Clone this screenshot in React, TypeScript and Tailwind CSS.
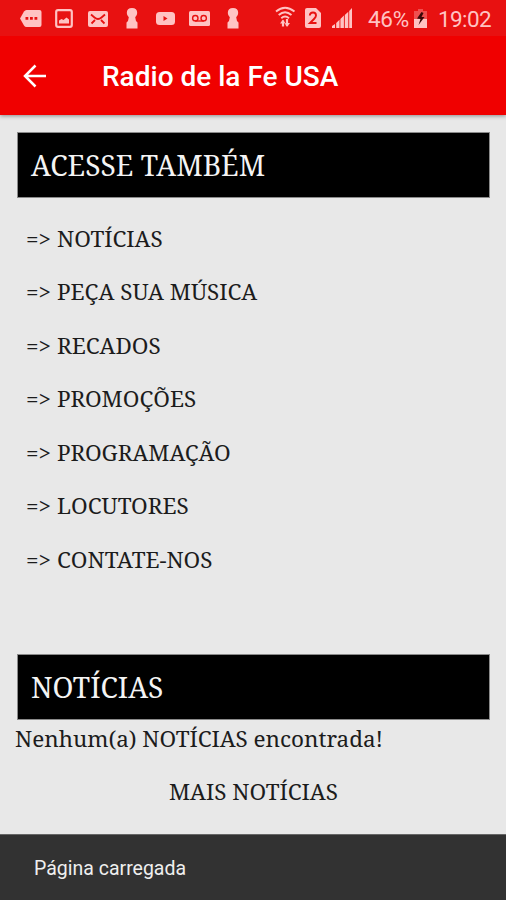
import { ReactNode } from 'react';

const menuItems = ['NOTÍCIAS', 'PEÇA SUA MÚSICA', 'RECADOS', 'PROMOÇÕES', 'PROGRAMAÇÃO', 'LOCUTORES', 'CONTATE-NOS'];

const KeyholeIcon = () => (
  <svg width="12" height="21" viewBox="0 0 12 21" fill="currentColor">
    <path d="M6 0Q11.200 0 11.200 5 11.200 7.500 9.200 9.300L10 13 11.500 14.500V20.500H.5V14.500L2 13 2.800 9.300Q.8 7.500 .8 5 .8 0 6 0z" />
  </svg>
);

const NotificationIcons = () => (
  <>
    {/* message bubble */}
    <svg className="absolute left-5 top-[10px]" width="22" height="17" viewBox="0 0 22 17">
      <path d="M6.500 0H19.500Q21.500 0 21.500 2V15Q21.500 17 19.500 17H6.500Q5 17 4 15.500L0 8.500 4 1.500Q5 0 6.500 0z" fill="currentColor" />
      <path d="M5.500 7h2.800v2.800h-2.800zM10 7h2.800v2.800H10zM14.500 7h2.800v2.800h-2.800z" fill="#e81111" />
    </svg>
    {/* picture */}
    <svg className="absolute left-[55px] top-[9px]" width="18" height="19" viewBox="0 0 18 19">
      <rect x="1.200" y="1.200" width="15.600" height="16.600" rx="1.800" fill="none" stroke="currentColor" strokeWidth="2.200" />
      <path d="M4 14.500V11.500l2.500-1.500L8.500 11l3-2.500L14 10.500v4z" fill="currentColor" />
    </svg>
    {/* mail */}
    <svg className="absolute left-[88px] top-[11px]" width="20" height="16" viewBox="0 0 20 16">
      <rect width="20" height="16" rx="2" fill="currentColor" />
      <path d="M3 3.500 6.500 6.500Q10 9.500 13.500 6.500L17 3.500M3.500 12.500 7 9M16.500 12.500 13 9" fill="none" stroke="#e81111" strokeWidth="1.800" />
    </svg>
    <span className="absolute left-[126px] top-[8px]"><KeyholeIcon /></span>
    {/* video */}
    <svg className="absolute left-[156px] top-[12px]" width="19" height="13" viewBox="0 0 19 13">
      <rect width="19" height="13" rx="3.500" fill="currentColor" />
      <path d="M7.500 4v5l4-2.500z" fill="#e81111" />
    </svg>
    {/* voicemail */}
    <svg className="absolute left-[189px] top-[11px]" width="21" height="15" viewBox="0 0 21 15">
      <rect width="21" height="15" rx="1.500" fill="currentColor" />
      <g fill="none" stroke="#e81111" strokeWidth="1.400">
        <circle cx="6.300" cy="7.200" r="2.700" />
        <circle cx="14.700" cy="7.200" r="2.700" />
        <path d="M6 10h9" />
      </g>
    </svg>
    <span className="absolute left-[227px] top-[8px]"><KeyholeIcon /></span>
  </>
);

const SystemIcons = () => (
  <>
    {/* wifi */}
    <svg className="absolute left-[275px] top-[6px]" width="21" height="22" viewBox="0 0 21 22" fill="none" stroke="currentColor">
      <path d="M1 5.500Q10 -2 19.500 5.500M3.700 9Q10 3.400 16.500 9M6.300 12.300Q10 8.800 14 12.300" strokeWidth="1.900" />
      <path d="M8 20.500v-6M12 13v7" strokeWidth="2.200" />
      <path d="M5 17.500 8 13.500 10.500 17.500zM9.500 17l2.500 4 3-4z" fill="currentColor" stroke="none" />
    </svg>
    {/* sim 2 */}
    <svg className="absolute left-[305px] top-[8px]" width="16" height="20" viewBox="0 0 16 20">
      <path d="M2 0h9l5 5v13q0 2-2 2H2q-2 0-2-2V2q0-2 2-2z" fill="currentColor" />
      <path d="M4.800 7.500Q5 4.500 8 4.500t3 3Q11 9 9 11L5 15h6.500" fill="none" stroke="#e81111" strokeWidth="1.900" />
    </svg>
    {/* signal */}
    <svg className="absolute left-[332px] top-[8px]" width="21" height="20" viewBox="0 0 21 20" fill="currentColor">
      <path d="M0 20v-2l3-2V20zM4.200 20v-5l3.300-3.300V20zM8.400 20v-9l3.500-3.500V20zM12.800 20V7l3.500-3.300V20zM17.200 20V3L20 0v20z" />
    </svg>
    <span className="absolute left-[368px] top-[6px] text-[22.500px] leading-[27px] tracking-[-0.3px]">46%</span>
    {/* battery */}
    <svg className="absolute left-[414px] top-[9px]" width="13" height="19" viewBox="0 0 13 19">
      <path d="M4 0h5v2h4v17H0V2h4z" fill="currentColor" opacity=".35" />
      <path d="M0 10h13v9H0z" fill="currentColor" />
      <path d="M7.500 3 3 9.500l3.500.500L4.500 16l6-8H7.500L9.500 4z" fill="#3b0808" />
    </svg>
    <span className="absolute left-[438px] top-[6px] text-[22.500px] leading-[27px] tracking-[-0.6px]">19:02</span>
  </>
);

const SectionTitle = ({ children }: { children: ReactNode }) => (
  <h2 className="ml-[17px] mr-4 h-[66px] border border-[#8a8a8a] bg-black pl-[13px] text-[28.200px] leading-[64px] text-[#f4f4f4]">
    {children}
  </h2>
);

const App = () => {
  return (
    <div className="flex h-[900px] w-[506px] flex-col overflow-hidden bg-[#e8e8e8] font-[Roboto,sans-serif]">
      {/* status bar */}
      <div className="relative h-9 shrink-0 bg-[#e81111] text-[#ffc3c3]">
        <NotificationIcons />
        <SystemIcons />
      </div>

      <header className="flex h-[79px] shrink-0 items-center bg-[#f00000] pl-[22px] text-white shadow-[0_1px_4px_rgba(0,0,0,0.4)]">
        <svg width="25" height="24" viewBox="0 0 25 24" fill="none" stroke="currentColor" strokeWidth="2.500">
          <path d="M24 12H3M13.500 1.500 3 12 13.500 22.500" />
        </svg>
        <h1 className="ml-[55px] pt-[2px] text-[28px] font-medium leading-[33px]">Radio de la Fe USA</h1>
      </header>

      <main className="flex-1 pt-[17px] font-['Noto_Serif','DejaVu_Serif',serif] text-[22.500px] text-[#1c1c1c]">
        <SectionTitle>ACESSE TAMBÉM</SectionTitle>

        <ul className="mt-[14px] pl-[26px]">
          {menuItems.map((item) => (
            <li key={item} className="flex h-[53.500px] items-center whitespace-nowrap">
              <span className="w-[31px]">=&gt;</span>
              <span>{item}</span>
            </li>
          ))}
        </ul>

        <div className="mt-[67px]">
          <SectionTitle>NOTÍCIAS</SectionTitle>
        </div>
        <p className="mt-px whitespace-nowrap pl-[15px] leading-[36px] tracking-[-0.03px]">Nenhum(a) NOTÍCIAS encontrada!</p>
        <p className="mt-[17px] pl-[1px] text-center leading-[36px]">MAIS NOTÍCIAS</p>
      </main>

      <footer className="flex h-[66px] shrink-0 items-center border-t border-[#666] bg-[#323232] pl-[34px] pt-[3px] text-[19.500px] text-[#efefef]">
        Página carregada
      </footer>
    </div>
  );
};
export default App;
